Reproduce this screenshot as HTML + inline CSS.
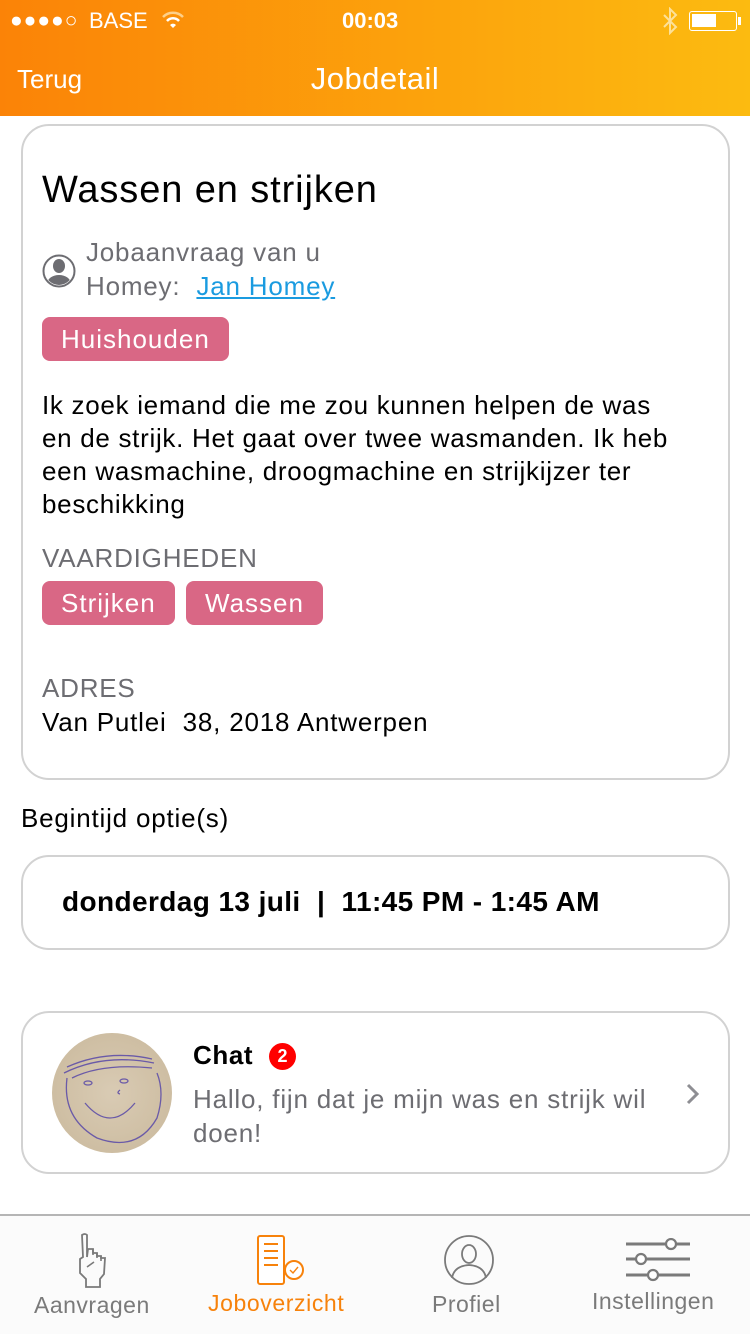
<!DOCTYPE html>
<html><head><meta charset="utf-8"><style>
*{margin:0;padding:0;box-sizing:border-box}
body{width:750px;height:1334px;position:relative;background:#fff;font-family:"Liberation Sans",sans-serif;overflow:hidden}
.hdr{position:absolute;left:0;top:0;width:750px;height:116px;background:linear-gradient(90deg,#fb8307,#fcbb10);color:#fff}
.abs{position:absolute}
.t{letter-spacing:0.8px}
.card{position:absolute;left:21px;width:709px;border:2px solid #d2d2d2;border-radius:28px;background:#fff}
.tag{position:absolute;height:44px;background:#d96785;color:#fff;border-radius:8px;font-size:26px;line-height:44px;padding:0 19px;letter-spacing:1px}
.gray{color:#6d6d72}
</style></head><body>
<div class="hdr">
 <div class="abs" style="left:10px;top:9px;font-size:21px;letter-spacing:1px">●●●●○</div>
 <div class="abs" style="left:89px;top:8px;font-size:22px">BASE</div>
 <svg class="abs" style="left:160px;top:10px" width="26" height="20" viewBox="0 0 26 20"><path d="M3 7a14 14 0 0 1 20 0" stroke="#fdd08a" stroke-width="2.5" fill="none"/><path d="M7 11a8 8 0 0 1 12 0" stroke="#fff" stroke-width="2.5" fill="none"/><path d="M13 18l-3-3a4 4 0 0 1 6 0z" fill="#fff"/></svg>
 <div class="abs" style="left:342px;top:8px;font-size:22px;font-weight:bold">00:03</div>
 <svg class="abs" style="left:661px;top:7px" width="18" height="28" viewBox="0 0 18 28"><path d="M3 8l12 12-6 6V2l6 6L3 20" stroke="#fde19a" stroke-width="2" fill="none"/></svg>
 <div class="abs" style="left:689px;top:11px;width:48px;height:20px;border:1.5px solid #fff;border-radius:3px"><div style="margin:2px;width:24px;height:13px;background:#fff"></div></div>
 <div class="abs" style="left:738px;top:17px;width:3px;height:8px;background:#fff"></div>
 <div class="abs" style="left:17px;top:64px;font-size:26px">Terug</div>
 <div class="abs" style="left:0;width:750px;text-align:center;top:61px;font-size:31px;letter-spacing:0.5px">Jobdetail</div>
</div>

<div class="card" style="top:124px;height:656px"></div>
<div class="abs" style="left:42px;top:169px;font-size:38px;color:#000;letter-spacing:0.9px">Wassen en strijken</div>
<svg class="abs" style="left:42px;top:254px" width="34" height="34" viewBox="0 0 34 34"><circle cx="17" cy="17" r="15.5" fill="#fff" stroke="#6d6d72" stroke-width="2"/><clipPath id="c"><circle cx="17" cy="17" r="14"/></clipPath><g clip-path="url(#c)" fill="#6d6d72"><ellipse cx="17" cy="12" rx="6" ry="7"/><path d="M4 34c0-9 6-13 13-13s13 4 13 13z"/></g></svg>
<div class="abs gray t" style="left:86px;top:235px;font-size:26px;line-height:34px">Jobaanvraag van u<br>Homey:&nbsp; <span style="color:#1a9be0;text-decoration:underline">Jan Homey</span></div>
<div class="tag" style="left:42px;top:317px">Huishouden</div>
<div class="abs" style="left:42px;top:389px;white-space:nowrap;font-size:26px;line-height:33px;color:#000;letter-spacing:0.7px">Ik zoek iemand die me zou kunnen helpen de was<br>en de strijk. Het gaat over twee wasmanden. Ik heb<br>een wasmachine, droogmachine en strijkijzer ter<br>beschikking</div>
<div class="abs gray t" style="left:42px;top:543px;font-size:26px">VAARDIGHEDEN</div>
<div class="tag" style="left:42px;top:581px">Strijken</div>
<div class="tag" style="left:186px;top:581px">Wassen</div>
<div class="abs gray t" style="left:42px;top:673px;font-size:26px">ADRES</div>
<div class="abs t" style="left:42px;top:707px;font-size:26px;color:#000">Van Putlei&nbsp; 38, 2018 Antwerpen</div>

<div class="abs t" style="left:21px;top:803px;font-size:26px;color:#000">Begintijd optie(s)</div>
<div class="card" style="top:855px;height:95px"></div>
<div class="abs" style="left:62px;top:886px;font-size:28px;font-weight:bold;color:#000;letter-spacing:0.4px">donderdag 13 juli &nbsp;| &nbsp;11:45 PM - 1:45 AM</div>

<div class="card" style="top:1011px;height:163px"></div>
<div class="abs" style="left:52px;top:1033px;width:120px;height:120px;border-radius:50%;background:radial-gradient(circle,#d9cbb4,#c9b89b)">
 <svg width="120" height="120" viewBox="0 0 120 120"><g stroke="#6a5aa8" stroke-width="1.3" fill="none"><path d="M12 40q40-20 90-10M15 34q40-18 85-8M20 45q30-15 80-10"/><path d="M15 45q-5 40 30 60q40 15 60-20q8-25 0-45"/><path d="M33 70q25 30 50 0"/><path d="M68 57q-4 3 0 4"/><ellipse cx="36" cy="50" rx="4" ry="2"/><ellipse cx="72" cy="48" rx="4" ry="2"/></g></svg>
</div>
<div class="abs" style="left:193px;top:1040px;font-size:26px;font-weight:bold;color:#000;letter-spacing:0.6px">Chat</div>
<div class="abs" style="left:269px;top:1043px;width:27px;height:27px;border-radius:50%;background:#f00;color:#fff;font-size:18px;font-weight:bold;text-align:center;line-height:27px">2</div>
<div class="abs gray t" style="left:193px;top:1082px;font-size:26px;line-height:34px;width:490px">Hallo, fijn dat je mijn was en strijk wil doen!</div>
<svg class="abs" style="left:685px;top:1082px" width="16" height="24" viewBox="0 0 16 24"><path d="M3 3l9 9-9 9" stroke="#8e8e93" stroke-width="3" fill="none"/></svg>

<div class="abs" style="left:0;top:1214px;width:750px;height:120px;background:#fbfbfb;border-top:2px solid #b5b5b5"></div>
<svg class="abs" style="left:74px;top:1232px" width="44" height="56" viewBox="0 0 44 56"><path d="M8 3q3-2 5 0v22l1-8h5v4h4v3h4v2h4l-1 16-4 5v8H12v-8l-6-6v-14l3-2z" stroke="#7a7a7a" stroke-width="1.8" fill="none"/><path d="M13 35l7-5M19 17v6M23 21v5M27 24v5" stroke="#7a7a7a" stroke-width="1.6"/></svg>
<div class="abs" style="left:34px;top:1292px;font-size:23px;color:#7a7a7a;letter-spacing:0.5px">Aanvragen</div>
<svg class="abs" style="left:256px;top:1234px" width="50" height="52" viewBox="0 0 50 52"><rect x="2" y="2" width="26" height="48" rx="2" stroke="#f7820b" stroke-width="2" fill="#fff"/><path d="M8 10h14M8 17h14M8 24h14M8 31h14" stroke="#f7820b" stroke-width="2"/><circle cx="38" cy="36" r="9" stroke="#f7820b" stroke-width="2" fill="#fff"/><path d="M34 36l3 3 5-6" stroke="#f7820b" stroke-width="1.4" fill="none"/></svg>
<div class="abs" style="left:208px;top:1290px;font-size:23px;color:#f7820b;letter-spacing:0.6px">Joboverzicht</div>
<svg class="abs" style="left:443px;top:1234px" width="52" height="52" viewBox="0 0 52 52"><circle cx="26" cy="26" r="24" stroke="#7a7a7a" stroke-width="1.8" fill="none"/><ellipse cx="26" cy="20" rx="7" ry="9" stroke="#7a7a7a" stroke-width="1.8" fill="none"/><path d="M9 44q2-12 17-13q15 1 17 13" stroke="#7a7a7a" stroke-width="1.8" fill="none"/></svg>
<div class="abs" style="left:432px;top:1291px;font-size:23px;color:#7a7a7a;letter-spacing:0.5px">Profiel</div>
<svg class="abs" style="left:624px;top:1238px" width="68" height="46" viewBox="0 0 68 46"><g stroke="#7a7a7a" stroke-width="3" fill="none"><path d="M2 6h40M52 6h14M2 21h10M22 21h44M2 37h22M34 37h32"/></g><g stroke="#7a7a7a" stroke-width="2.2" fill="#fff"><circle cx="47" cy="6" r="5"/><circle cx="17" cy="21" r="5"/><circle cx="29" cy="37" r="5"/></g></svg>
<div class="abs" style="left:592px;top:1288px;font-size:23px;color:#7a7a7a;letter-spacing:0.5px">Instellingen</div>
</body></html>
